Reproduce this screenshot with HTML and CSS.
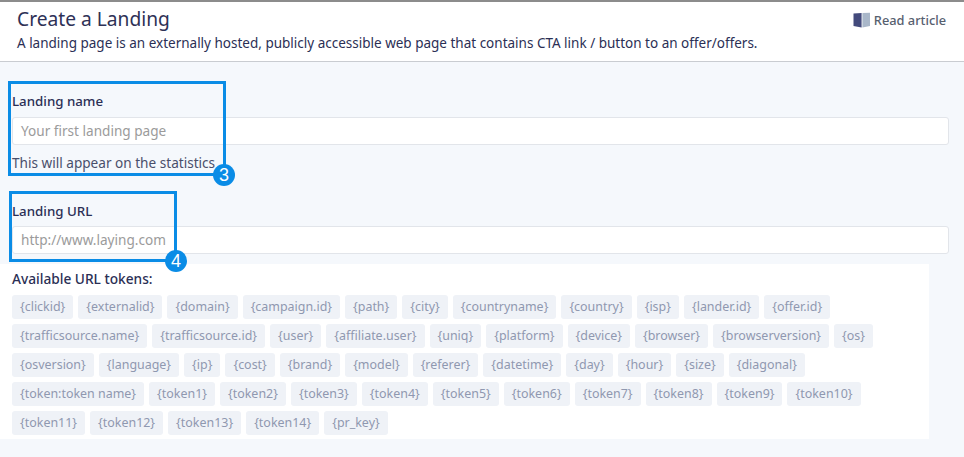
FILE: index.html
```html
<!DOCTYPE html>
<html lang="en">
<head>
<meta charset="utf-8">
<title>Create a Landing</title>
<link rel="stylesheet" href="styles.css">
</head>
<body>
<header class="head">
  <div class="head-text">
    <h1>Create a Landing</h1>
    <p>A landing page is an externally hosted, publicly accessible web page that contains CTA link / button to an offer/offers.</p>
  </div>
  <a class="article">
    <svg width="18" height="16" viewBox="0 0 18 16"><path d="M0.5 1.5 L8.6 1 V15.5 L0.5 14 Z" fill="#434a7c"/><path d="M9.4 1 L17 0.7 V14 L9.4 15.5 Z" fill="#a9b7c9"/></svg>
    Read article
  </a>
</header>
<main class="form">
  <div class="field first">
    <label>Landing name</label>
    <div class="input">Your first landing page</div>
    <div class="hint">This will appear on the statistics</div>
  </div>
  <div class="field second">
    <label>Landing URL</label>
    <div class="input">http://www.laying.com</div>
  </div>
  <section class="tokens">
    <h2>Available URL tokens:</h2>
    <div class="list">
      <span>{clickid}</span><span>{externalid}</span><span>{domain}</span><span>{campaign.id}</span><span>{path}</span><span>{city}</span><span>{countryname}</span><span>{country}</span><span>{isp}</span><span>{lander.id}</span><span>{offer.id}</span><span>{trafficsource.name}</span><span>{trafficsource.id}</span><span>{user}</span><span>{affiliate.user}</span><span>{uniq}</span><span>{platform}</span><span>{device}</span><span>{browser}</span><span>{browserversion}</span><span>{os}</span><span>{osversion}</span><span>{language}</span><span>{ip}</span><span>{cost}</span><span>{brand}</span><span>{model}</span><span>{referer}</span><span>{datetime}</span><span>{day}</span><span>{hour}</span><span>{size}</span><span>{diagonal}</span><span>{token:token name}</span><span>{token1}</span><span>{token2}</span><span>{token3}</span><span>{token4}</span><span>{token5}</span><span>{token6}</span><span>{token7}</span><span>{token8}</span><span>{token9}</span><span>{token10}</span><span>{token11}</span><span>{token12}</span><span>{token13}</span><span>{token14}</span><span>{pr_key}</span>
    </div>
  </section>
</main>
<div class="mark mark-a"><b>3</b></div>
<div class="mark mark-b"><b>4</b></div>
</body>
</html>
```
FILE: styles.css
```css
* { box-sizing: border-box; }
html, body { margin: 0; height: 100%; overflow: hidden; }
body {
  background: #f5f8fc;
  font-family: "Noto Sans", "Open Sans", sans-serif;
  color: #2b2f55;
  position: relative;
}
.head {
  height: 62px;
  background: #fff;
  border-top: 2px solid #8c8c8c;
  border-bottom: 1px solid #c9ccd1;
  padding: 3px 18px 0 17px;
  display: flex;
  justify-content: space-between;
  align-items: flex-start;
}
h1 { margin: 0 0 1px; font-size: 19.2px; line-height: 27px; font-weight: 400; color: #2e3156; }
.head p { margin: 0; font-size: 13.5px; line-height: 20px; color: #2b2f55; }
.article {
  display: flex; align-items: center; gap: 3px;
  margin-top: 7px;
  font-size: 12.8px; font-weight: 500; line-height: 16px; color: #57606f;
}
.form { padding: 30px 15px 0 12px; }
.field label { display: block; font-size: 13.3px; font-weight: 500; line-height: 18px; color: #2b2f55; margin-bottom: 7px; }
.input {
  height: 28px;
  background: #fff;
  border: 1px solid #e2e5ea;
  border-radius: 3px;
  padding: 0 8px;
  font-size: 13.6px;
  line-height: 26px;
  color: #9b9b9b;
}
.hint { margin-top: 8px; font-size: 13.6px; line-height: 20px; color: #4a4f6b; }
.second { margin-top: 29px; }
.second label { margin-bottom: 6px; }
.tokens {
  margin: 10px 0 0 -12px;
  width: 929px;
  height: 175px;
  background: #fff;
  padding: 6px 12px 0;
}
h2 { margin: 0 0 7px; font-size: 13.7px; line-height: 18px; font-weight: 500; color: #2b2f55; }
.list { display: flex; flex-wrap: wrap; gap: 5px; }
.list span {
  height: 24px;
  padding: 0 8px;
  background: #eff2f7;
  border-radius: 3px;
  font-size: 12.45px;
  line-height: 24px;
  color: #8f98b0;
  white-space: nowrap;
}
.mark { position: absolute; border: 3px solid #0a8ce6; }
.mark b {
  position: absolute; right: -12px; bottom: -13px;
  width: 22px; height: 22px; border-radius: 50%;
  background: #0a8ce6; color: #fff;
  font: 400 18px/22px "Liberation Sans", sans-serif;
  text-align: center;
}
.mark-a { left: 8px; top: 81px; width: 218px; height: 95px; }
.mark-b { left: 9px; top: 191px; width: 168px; height: 71px; }
.mark-b b { right: -13px; bottom: -13px; }
```
